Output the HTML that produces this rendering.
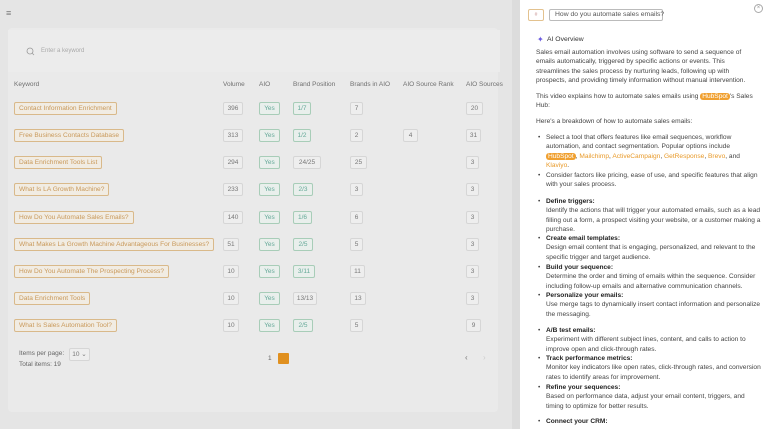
<!DOCTYPE html>
<html><head><meta charset="utf-8"><style>
*{margin:0;padding:0;box-sizing:border-box}
body{width:768px;height:429px;overflow:hidden;background:#e5e5e5;font-family:"Liberation Sans",sans-serif;position:relative;color:#666}
.a{position:absolute;white-space:nowrap}
.card{position:absolute;left:8px;top:28px;width:490px;height:384px;background:#eaeaea;border-radius:4px}
.srch{position:absolute;left:8px;top:30px;width:492px;height:42px;background:#ececec}
.hd{font-size:6.5px;color:#707070;top:81px}
.kw{position:absolute;left:14px;height:13px;border:1px solid #d9b98a;background:#f1ece3;color:#c9995a;font-size:6.6px;line-height:11px;padding:0 4px;border-radius:2px}
.b{position:absolute;height:13px;border:1px solid #d6d6d6;background:#eeeeee;font-size:6.5px;line-height:11px;text-align:center;color:#777;border-radius:2px}
.g{border-color:#a8cdb8;color:#6a9;background:#e9efec}
.p{position:absolute;left:520px;top:0;width:248px;height:429px;background:#fff}
.t{font-size:6.6px;color:#444;line-height:9.4px;position:absolute;left:536px;width:222px}
.li{position:absolute;left:546px;width:216px;font-size:6.6px;color:#444;line-height:9.4px}
.li:before{content:"•";position:absolute;left:-8px}
b{color:#222}
.o{color:#e89a2a}
.hs{background:#f0a030;color:#fff;border-radius:3px;padding:0 2px}
</style></head><body>
<div class="a" style="left:6px;top:8px;font-size:9px;color:#777">≡</div>
<div class="card"></div>
<div class="srch"></div>
<svg class="a" style="left:26px;top:47px" width="9" height="9" viewBox="0 0 9 9"><circle cx="4" cy="4" r="3" fill="none" stroke="#999" stroke-width="0.8"/><path d="M6 6l2 2" stroke="#999" stroke-width="0.8"/></svg>
<div class="a" style="left:41px;top:48px;font-size:6px;color:#aaa">Enter a keyword</div>
<div class="a" style="left:512px;top:0;width:8px;height:429px;background:#dcdcdc"></div>

<div class="a hd" style="left:14px">Keyword</div>
<div class="a hd" style="left:223px">Volume</div>
<div class="a hd" style="left:259px">AIO</div>
<div class="a hd" style="left:293px">Brand Position</div>
<div class="a hd" style="left:350px">Brands in AIO</div>
<div class="a hd" style="left:403px">AIO Source Rank</div>
<div class="a hd" style="left:466px">AIO Sources</div>

<div class="kw" style="top:102px">Contact Information Enrichment</div>
<div class="b" style="left:223px;top:102px;width:20px">396</div><div class="b g" style="left:259px;top:102px;width:21px">Yes</div><div class="b g" style="left:293px;top:102px;width:18px">1/7</div><div class="b" style="left:350px;top:102px;width:13px">7</div><div class="b" style="left:466px;top:102px;width:17px">20</div>

<div class="kw" style="top:129px">Free Business Contacts Database</div>
<div class="b" style="left:223px;top:129px;width:20px">313</div><div class="b g" style="left:259px;top:129px;width:21px">Yes</div><div class="b g" style="left:293px;top:129px;width:18px">1/2</div><div class="b" style="left:350px;top:129px;width:13px">2</div><div class="b" style="left:403px;top:129px;width:15px">4</div><div class="b" style="left:466px;top:129px;width:15px">31</div>

<div class="kw" style="top:156px">Data Enrichment Tools List</div>
<div class="b" style="left:223px;top:156px;width:20px">294</div><div class="b g" style="left:259px;top:156px;width:21px">Yes</div><div class="b" style="left:293px;top:156px;width:28px">24/25</div><div class="b" style="left:350px;top:156px;width:17px">25</div><div class="b" style="left:466px;top:156px;width:13px">3</div>

<div class="kw" style="top:183px">What Is LA Growth Machine?</div>
<div class="b" style="left:223px;top:183px;width:20px">233</div><div class="b g" style="left:259px;top:183px;width:21px">Yes</div><div class="b g" style="left:293px;top:183px;width:20px">2/3</div><div class="b" style="left:350px;top:183px;width:13px">3</div><div class="b" style="left:466px;top:183px;width:13px">3</div>

<div class="kw" style="top:211px">How Do You Automate Sales Emails?</div>
<div class="b" style="left:223px;top:211px;width:20px">140</div><div class="b g" style="left:259px;top:211px;width:21px">Yes</div><div class="b g" style="left:293px;top:211px;width:19px">1/6</div><div class="b" style="left:350px;top:211px;width:13px">6</div><div class="b" style="left:466px;top:211px;width:13px">3</div>

<div class="kw" style="top:238px">What Makes La Growth Machine Advantageous For Businesses?</div>
<div class="b" style="left:223px;top:238px;width:16px">51</div><div class="b g" style="left:259px;top:238px;width:21px">Yes</div><div class="b g" style="left:293px;top:238px;width:20px">2/5</div><div class="b" style="left:350px;top:238px;width:13px">5</div><div class="b" style="left:466px;top:238px;width:13px">3</div>

<div class="kw" style="top:265px">How Do You Automate The Prospecting Process?</div>
<div class="b" style="left:223px;top:265px;width:16px">10</div><div class="b g" style="left:259px;top:265px;width:21px">Yes</div><div class="b g" style="left:293px;top:265px;width:22px">3/11</div><div class="b" style="left:350px;top:265px;width:15px">11</div><div class="b" style="left:466px;top:265px;width:13px">3</div>

<div class="kw" style="top:292px">Data Enrichment Tools</div>
<div class="b" style="left:223px;top:292px;width:16px">10</div><div class="b g" style="left:259px;top:292px;width:21px">Yes</div><div class="b" style="left:293px;top:292px;width:24px">13/13</div><div class="b" style="left:350px;top:292px;width:16px">13</div><div class="b" style="left:466px;top:292px;width:13px">3</div>

<div class="kw" style="top:319px">What Is Sales Automation Tool?</div>
<div class="b" style="left:223px;top:319px;width:16px">10</div><div class="b g" style="left:259px;top:319px;width:21px">Yes</div><div class="b g" style="left:293px;top:319px;width:20px">2/5</div><div class="b" style="left:350px;top:319px;width:13px">5</div><div class="b" style="left:466px;top:319px;width:15px">9</div>

<div class="a" style="left:19px;top:350px;font-size:6.5px;color:#666">Items per page:</div>
<div class="b" style="left:69px;top:348px;width:21px">10 ⌄</div>
<div class="a" style="left:19px;top:361px;font-size:6.5px;color:#666">Total items: 19</div>
<div class="a" style="left:268px;top:355px;font-size:6.5px;color:#666">1</div>
<div class="a" style="left:278px;top:353px;width:11px;height:11px;background:#e0901f;border-radius:1px"></div>
<div class="a" style="left:465px;top:353px;font-size:8px;color:#777">‹</div>
<div class="a" style="left:483px;top:353px;font-size:8px;color:#ccc">›</div>

<div class="p"></div>
<div class="a" style="left:528px;top:9px;width:16px;height:12px;border:1px solid #e3c28f;border-radius:2px;font-size:5px;text-align:center;line-height:10px;color:#c99">#</div>
<div class="a" style="left:549px;top:9px;width:114px;height:12px;border:1px solid #bbb;border-radius:2px;font-size:6.8px;line-height:10px;padding-left:5px;color:#555">How do you automate sales emails?</div>
<div class="a" style="left:754px;top:4px;width:9px;height:9px;border:1px solid #aaa;border-radius:50%;font-size:6px;line-height:7px;text-align:center;color:#999">×</div>
<div class="a" style="left:537px;top:35px;font-size:8px;color:#6a5ae0">✦</div>
<div class="a" style="left:547px;top:36px;font-size:6.8px;color:#333">AI Overview</div>
<div class="t" style="top:48px">Sales email automation involves using software to send a sequence of emails automatically, triggered by specific actions or events. This streamlines the sales process by nurturing leads, following up with prospects, and providing timely information without manual intervention.</div>
<div class="t" style="top:92px">This video explains how to automate sales emails using <span class="hs">HubSpot</span>'s Sales Hub:</div>
<div class="t" style="top:117px">Here's a breakdown of how to automate sales emails:</div>
<div class="li" style="top:133px">Select a tool that offers features like email sequences, workflow automation, and contact segmentation. Popular options include <span class="hs">HubSpot</span>, <span class="o">Mailchimp</span>, <span class="o">ActiveCampaign</span>, <span class="o">GetResponse</span>, <span class="o">Brevo</span>, and <span class="o">Klaviyo</span>.</div>
<div class="li" style="top:171px">Consider factors like pricing, ease of use, and specific features that align with your sales process.</div>
<div class="li" style="top:197px"><b>Define triggers:</b><br>Identify the actions that will trigger your automated emails, such as a lead filling out a form, a prospect visiting your website, or a customer making a purchase.</div>
<div class="li" style="top:234px"><b>Create email templates:</b><br>Design email content that is engaging, personalized, and relevant to the specific trigger and target audience.</div>
<div class="li" style="top:263px"><b>Build your sequence:</b><br>Determine the order and timing of emails within the sequence. Consider including follow-up emails and alternative communication channels.</div>
<div class="li" style="top:291px"><b>Personalize your emails:</b><br>Use merge tags to dynamically insert contact information and personalize the messaging.</div>
<div class="li" style="top:326px"><b>A/B test emails:</b><br>Experiment with different subject lines, content, and calls to action to improve open and click-through rates.</div>
<div class="li" style="top:354px"><b>Track performance metrics:</b><br>Monitor key indicators like open rates, click-through rates, and conversion rates to identify areas for improvement.</div>
<div class="li" style="top:383px"><b>Refine your sequences:</b><br>Based on performance data, adjust your email content, triggers, and timing to optimize for better results.</div>
<div class="li" style="top:417px"><b>Connect your CRM:</b></div>
</body></html>
